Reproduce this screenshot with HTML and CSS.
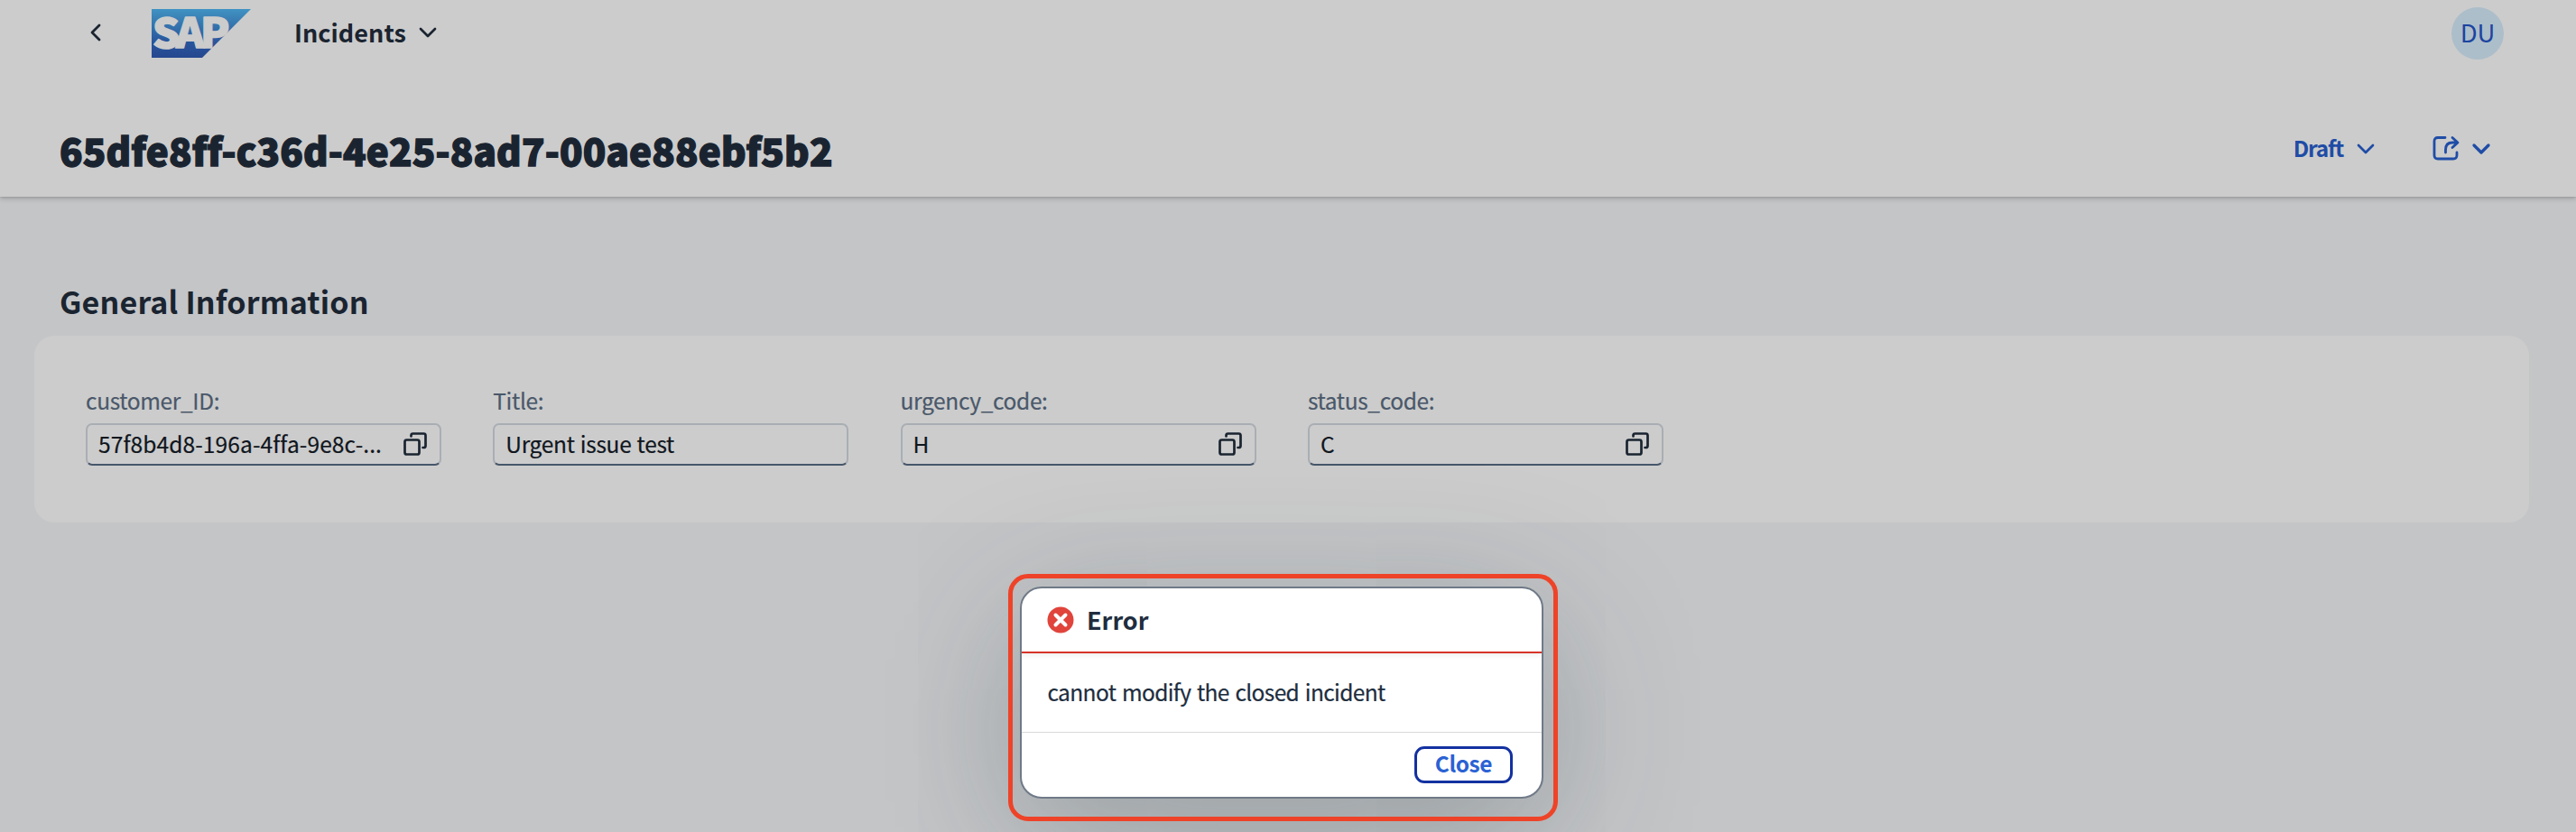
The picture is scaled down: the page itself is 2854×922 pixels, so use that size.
FILE: index.html
```html
<!DOCTYPE html>
<html lang="en">
<head>
<meta charset="utf-8">
<title>Incidents</title>
<link rel="stylesheet" href="styles.css">
</head>
<body>
<div class="page">
  <header class="head">
    <div class="shell">
      <svg class="back" width="12" height="20" viewBox="0 0 12 20"><path d="M10 2 L2 10 L10 18"/></svg>
      <svg class="logo" width="110" height="54" viewBox="0 0 110 54">
        <defs><linearGradient id="sap" x1="0" y1="0" x2="0" y2="1"><stop offset="0" stop-color="#4093c4"/><stop offset=".2" stop-color="#3a80b5"/><stop offset=".7" stop-color="#28539b"/><stop offset="1" stop-color="#264890"/></linearGradient></defs>
        <path d="M0 0H110L56 54H0Z" fill="url(#sap)"/>
        <text class="logo-text" y="43" transform="translate(1 0) scale(1.050 1)">SAP</text>
      </svg>
      <span class="app">Incidents</span>
      <svg class="chev app-chev" width="20" height="12" viewBox="0 0 20 12"><path d="M2 2 L10 10 L18 2"/></svg>
      <span class="avatar">DU</span>
    </div>
    <div class="title-row">
      <h1 class="title">65dfe8ff-c36d-4e25-8ad7-00ae88ebf5b2</h1>
      <span class="draft">Draft</span>
      <svg class="chev draft-chev" width="20" height="12" viewBox="0 0 20 12"><path d="M2 2 L10 10 L18 2"/></svg>
      <svg class="share" width="30" height="28" viewBox="0 0 30 28"><path d="M14 2.500H6Q2 2.500 2 6.500V22Q2 26 6 26H23Q27 26 27 22V19M14.500 19V16Q14.500 8 22 8H27M22 2.500L28 8L22 13.500"/></svg>
      <svg class="chev share-chev" width="20" height="12" viewBox="0 0 20 12"><path d="M2 2 L10 10 L18 2"/></svg>
    </div>
  </header>
  <main class="content">
    <h2 class="section">General Information</h2>
    <div class="card">
      <div class="field"><label class="label">customer_ID:</label>
        <div class="input"><span class="value value-id">57f8b4d8-196a-4ffa-9e8c-...</span><svg class="help" width="26" height="26" viewBox="0 0 26 26"><rect x="1.500" y="8.500" width="16" height="16" rx="2"/><path d="M8.500 4.500V3.500Q8.500 1.500 10.500 1.500H22.500Q24.500 1.500 24.500 3.500V15Q24.500 17 22.500 17H21.500"/></svg></div></div>
      <div class="field"><label class="label">Title:</label>
        <div class="input"><span class="value">Urgent issue test</span></div></div>
      <div class="field"><label class="label">urgency_code:</label>
        <div class="input"><span class="value">H</span><svg class="help" width="26" height="26" viewBox="0 0 26 26"><rect x="1.500" y="8.500" width="16" height="16" rx="2"/><path d="M8.500 4.500V3.500Q8.500 1.500 10.500 1.500H22.500Q24.500 1.500 24.500 3.500V15Q24.500 17 22.500 17H21.500"/></svg></div></div>
      <div class="field"><label class="label">status_code:</label>
        <div class="input"><span class="value">C</span><svg class="help" width="26" height="26" viewBox="0 0 26 26"><rect x="1.500" y="8.500" width="16" height="16" rx="2"/><path d="M8.500 4.500V3.500Q8.500 1.500 10.500 1.500H22.500Q24.500 1.500 24.500 3.500V15Q24.500 17 22.500 17H21.500"/></svg></div></div>
    </div>
  </main>
  <div class="dialog">
    <div class="dialog-head">
      <svg class="error" width="30" height="30" viewBox="0 0 30 30"><circle cx="15" cy="15" r="14.500"/><path d="M9.500 9.500L20.500 20.500M20.500 9.500L9.500 20.500"/></svg>
      <span class="dialog-title">Error</span>
    </div>
    <p class="message">cannot modify the closed incident</p>
    <div class="dialog-foot"><button class="close">Close</button></div>
  </div>
  <div class="highlight"></div>
</div>
</body>
</html>
```
FILE: styles.css
```css
* { box-sizing: border-box; }
body { margin: 0; font-family: "Noto Sans CJK SC", "Noto Sans", sans-serif; color: #1a2430; white-space: nowrap; }
.page { position: relative; width: 2854px; height: 922px; overflow: hidden; background: #c4c5c7; }
svg { display: block; flex: none; fill: none; stroke-linecap: round; stroke-linejoin: round; overflow: visible; }
h1, h2, p { margin: 0; }
.head { height: 218px; background: #ccc; box-shadow: 0 0 3px rgba(0,0,0,.2), 0 3px 5px rgba(0,0,0,.14); }
.shell { display: flex; align-items: center; height: 74px; padding: 0 80px 0 100px; }
.back { stroke: #1a2430; stroke-width: 2.8; margin: 0 56px 2px 0; }
.logo-text { fill: #ccc; stroke: #ccc; stroke-width: 1.6; font-size: 45px; font-weight: 900; letter-spacing: -4px; }
.app { margin-left: 48px; padding-bottom: 2px; font-size: 27px; font-weight: 700; line-height: 40px; letter-spacing: .05px; }
.chev { stroke: #1f4ca6; stroke-width: 2.7; }
.app-chev { stroke: #1a2430; margin: 0 0 2px 14px; }
.avatar { margin-left: auto; width: 58px; height: 58px; padding-bottom: 5px; border-radius: 50%; background: #acbeca; color: #1c44a0; display: flex; align-items: center; justify-content: center; font-size: 27.5px; }
.title-row { display: flex; align-items: center; height: 60px; margin-top: 60px; padding: 0 95px 0 66px; }
.title { padding-top: 3px; font-size: 42px; font-weight: 900; line-height: 60px; margin-right: auto; letter-spacing: .17px; -webkit-text-stroke: 1.4px #1a2430; }
.draft { color: #1f4ca6; font-size: 24.5px; font-weight: 700; letter-spacing: -1.2px; padding-bottom: 2px; }
.draft-chev { margin-left: 15px; margin-top: 2px; }
.share { stroke: #1f4ca6; stroke-width: 2.8; margin-left: 64px; }
.share-chev { margin-left: 14px; margin-top: 2px; stroke-width: 3.3; }
.content { padding: 92px 52px 0 38px; }
.section { height: 62px; padding-left: 28px; font-size: 34px; line-height: 48px; font-weight: 700; letter-spacing: .18px; }
.card { height: 207px; border-radius: 22px; background: #ccc; padding: 54px 57px; display: flex; gap: 57.3px; }
.field { width: 394px; }
.label { display: block; height: 43px; color: #4a586a; font-size: 24.5px; line-height: 36px; letter-spacing: -.35px; -webkit-text-stroke: .2px #4a586a; }
.input { display: flex; align-items: center; justify-content: space-between; height: 47px; padding: 0 14px 0 12px; border: 2px solid #a9aeb4; border-bottom-color: #46566a; border-radius: 7px; font-size: 24.5px; color: #10161d; }
.value { padding-bottom: 2px; letter-spacing: -.3px; word-spacing: 1px; -webkit-text-stroke: .2px #10161d; }
.value-id { letter-spacing: .12px; }
.help { stroke: #1a2430; stroke-width: 2.7; margin-bottom: 1px; }
.dialog { position: absolute; left: 1130px; top: 650px; width: 580px; height: 235px; border: 2px solid #6f7a87; border-radius: 24px; background: #fff; color: #202d3e; box-shadow: 0 40px 172px rgba(34,56,62,.3); overflow: hidden; }
.dialog-head { display: flex; align-items: center; height: 72px; padding-left: 28px; border-bottom: 2px solid #d7342a; box-shadow: 0 2px 6px rgba(0,0,0,.08); }
.error circle { fill: #e0443b; }
.error path { stroke: #fff; stroke-width: 4; }
.dialog-title { margin-left: 14px; padding-bottom: 2px; font-size: 27px; font-weight: 700; }
.message { height: 88px; padding: 25px 28.5px; font-size: 24.5px; line-height: 36px; letter-spacing: -.63px; word-spacing: 1.8px; -webkit-text-stroke: .2px #202d3e; border-bottom: 1px solid #d9d9d9; }
.dialog-foot { display: flex; justify-content: flex-end; padding: 15px 32px; }
.close { width: 109px; height: 41px; padding: 0 0 3px; border: 3px solid #1331a0; border-radius: 11px; background: #fff; color: #2a62d4; font: 700 24.5px/32px "Noto Sans CJK SC", "Noto Sans", sans-serif; letter-spacing: -.4px; }
.highlight { position: absolute; left: 1117px; top: 636px; width: 609px; height: 274px; border: 5px solid #ee4328; border-radius: 22px; }
```
